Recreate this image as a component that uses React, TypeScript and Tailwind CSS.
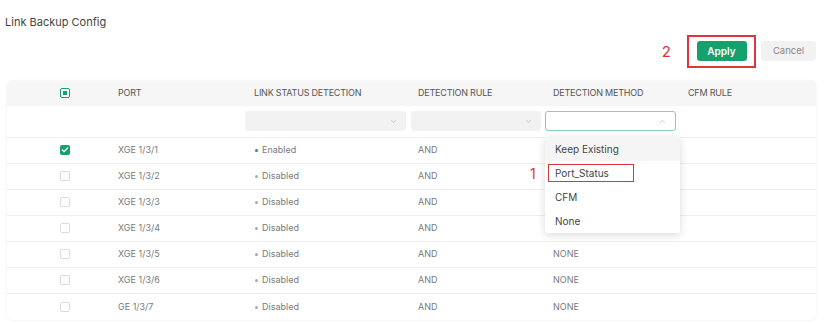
import { Check, ChevronDown, ChevronUp } from 'lucide-react'

const rows = [
  { port: 'XGE 1/3/1', on: true, checked: true, method: '' },
  { port: 'XGE 1/3/2', on: false, checked: false, method: '' },
  { port: 'XGE 1/3/3', on: false, checked: false, method: '' },
  { port: 'XGE 1/3/4', on: false, checked: false, method: '' },
  { port: 'XGE 1/3/5', on: false, checked: false, method: 'NONE' },
  { port: 'XGE 1/3/6', on: false, checked: false, method: 'NONE' },
  { port: 'GE 1/3/7', on: false, checked: false, method: 'NONE' },
]

const grid = 'grid grid-cols-[103px_135px_165px_135px_135px_1fr]'

function Box({ checked }: { checked: boolean }) {
  if (checked) {
    return (
      <span className="flex h-[10px] w-[10px] items-center justify-center rounded-[2px] bg-[#16a06b]">
        <Check size={8} strokeWidth={4} className="text-white" />
      </span>
    )
  }
  return <span className="block h-[10px] w-[10px] rounded-[2px] border border-[#dcdcdc] bg-white" />
}

function FilterSelect({ open }: { open?: boolean }) {
  return (
    <div
      className={
        'mr-[4px] flex h-[20px] items-center justify-end rounded-[3px] pr-[8px] ' +
        (open ? 'border border-[#7dd3ae] bg-white' : 'bg-[#f2f2f2]')
      }
    >
      {open ? (
        <ChevronUp size={9} strokeWidth={1.5} className="text-[#aaa]" />
      ) : (
        <ChevronDown size={9} strokeWidth={1.5} className="text-[#aaa]" />
      )}
    </div>
  )
}

export default function App() {
  return (
    <div className="h-[324px] w-[831px] bg-white font-['Inter',sans-serif] text-[#555]">
      <div className="px-[5px] pt-[14px] text-[11px] text-[#444]">Link Backup Config</div>

      <div className="mt-[4px] flex items-center justify-end pr-[15px]">
        <span className="mr-[16px] text-[15px] leading-none text-[#d9363e]">2</span>
        <div className="flex h-[33px] w-[69px] items-center justify-center border-2 border-[#e0353f]">
          <button className="h-[20px] w-[50px] rounded-[3px] bg-[#17a06b] text-[10px] font-semibold text-white">
            Apply
          </button>
        </div>
        <button className="ml-[5px] h-[20px] w-[55px] rounded-[3px] bg-[#f2f2f2] text-[9.5px] text-[#888]">
          Cancel
        </button>
      </div>

      <div className="mx-[7px] mt-[13px] h-[239px] w-[809px] rounded-[5px] shadow-[0_0_3px_rgba(0,0,0,0.08)]">
        <div className={grid + ' h-[25px] items-center rounded-t-[5px] bg-[#f6f6f6] text-[9px] tracking-[-0.2px] text-[#555]'}>
          <div className="flex justify-center pl-[13px]">
            <span className="flex h-[10px] w-[10px] items-center justify-center rounded-[2px] border border-[#16a06b] bg-white">
              <span className="h-[4px] w-[4px] bg-[#16a06b]" />
            </span>
          </div>
          <div className="pl-[8px]">PORT</div>
          <div className="pl-[9px]">LINK STATUS DETECTION</div>
          <div className="pl-[8px]">DETECTION RULE</div>
          <div className="pl-[8px]">DETECTION METHOD</div>
          <div className="pl-[8px]">CFM RULE</div>
        </div>

        <div className={grid + ' h-[32px] items-center border-b border-[#efefef]'}>
          <div />
          <div />
          <FilterSelect />
          <div className="pl-[1px]">
            <FilterSelect />
          </div>
          <div className="relative">
            <FilterSelect open />
            <div className="absolute left-0 top-[26px] z-10 w-[135px] rounded-[3px] bg-white text-[10px] text-[#444] shadow-[0_2px_8px_rgba(0,0,0,0.15)]">
              <div className="flex h-[24px] items-center bg-[#f5f5f5] pl-[10px]">Keep Existing</div>
              <div className="flex h-[24px] items-center pl-[3px]">
                <span className="flex h-[18px] w-[86px] items-center border-[1.5px] border-solid border-[#d9363e] pl-[6px]">
                  Port_Status
                </span>
              </div>
              <div className="flex h-[24px] items-center pl-[10px]">CFM</div>
              <div className="flex h-[24px] items-center pl-[10px]">None</div>
              <span className="absolute left-[-15px] top-[30px] text-[14px] leading-none text-[#d9363e]">1</span>
            </div>
          </div>
          <div />
        </div>

        {rows.map((r, i) => (
          <div
            key={r.port}
            className={
              grid +
              ' items-center text-[9px] text-[#7a7a7a] ' +
              (i === rows.length - 1 ? 'h-[27px]' : 'h-[26px] border-b border-[#efefef]')
            }
          >
            <div className="flex justify-center pl-[13px]">
              <Box checked={r.checked} />
            </div>
            <div className="pl-[8px]">{r.port}</div>
            <div className="flex items-center pl-[10px]">
              <span className={'mr-[4px] h-[3px] w-[3px] rounded-full ' + (r.on ? 'bg-[#16a06b]' : 'bg-[#aaa]')} />
              {r.on ? 'Enabled' : 'Disabled'}
            </div>
            <div className="pl-[8px]">AND</div>
            <div className="pl-[8px]">{r.method}</div>
            <div />
          </div>
        ))}
      </div>
    </div>
  )
}
